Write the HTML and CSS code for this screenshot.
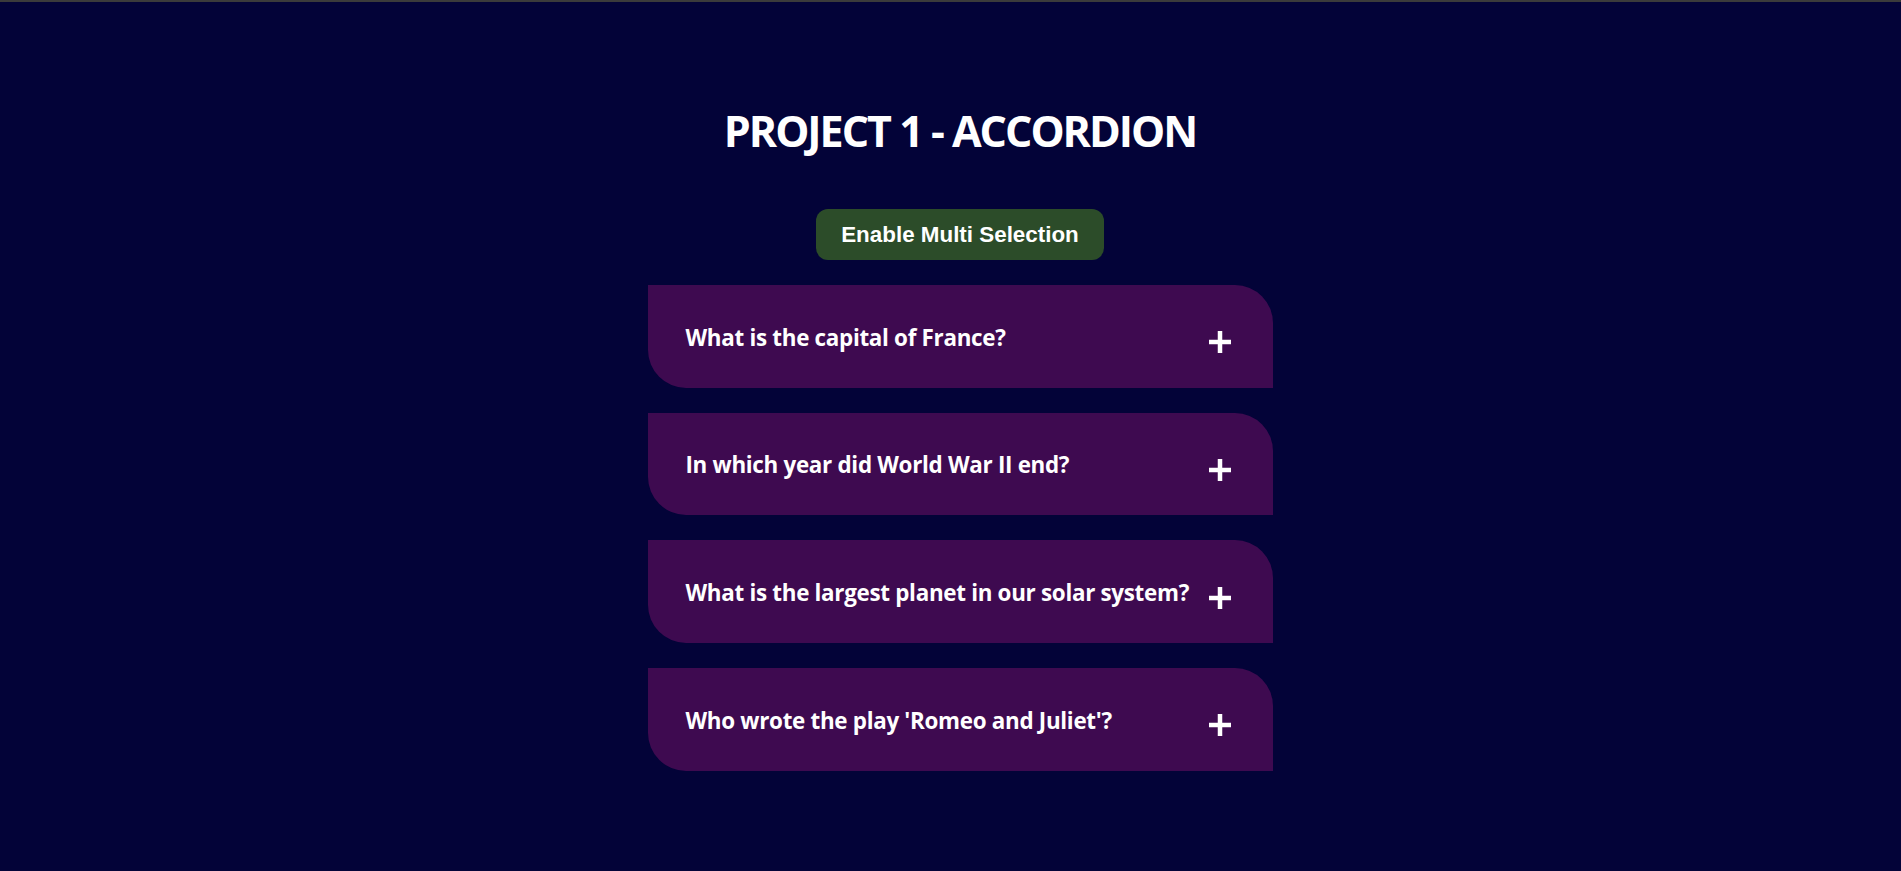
FILE: index.html
```html
<!DOCTYPE html>
<html lang="en">
<head>
<meta charset="utf-8">
<title>Accordion</title>
<link rel="stylesheet" href="styles.css">
</head>
<body>
<div class="topbar"></div>
<main class="page">
  <h1 class="title">PROJECT 1 - ACCORDION</h1>
  <button class="multi-btn">Enable Multi Selection</button>
  <div class="accordion">
    <div class="item">
      <span class="question">What is the capital of France?</span>
      <svg class="plus" viewBox="0 0 22 22" width="22" height="22"><rect x="8.75" y="0" width="4.5" height="22" fill="#fff"/><rect x="0" y="8.75" width="22" height="4.5" fill="#fff"/></svg>
    </div>
    <div class="item">
      <span class="question">In which year did World War II end?</span>
      <svg class="plus" viewBox="0 0 22 22" width="22" height="22"><rect x="8.75" y="0" width="4.5" height="22" fill="#fff"/><rect x="0" y="8.75" width="22" height="4.5" fill="#fff"/></svg>
    </div>
    <div class="item">
      <span class="question">What is the largest planet in our solar system?</span>
      <svg class="plus" viewBox="0 0 22 22" width="22" height="22"><rect x="8.75" y="0" width="4.5" height="22" fill="#fff"/><rect x="0" y="8.75" width="22" height="4.5" fill="#fff"/></svg>
    </div>
    <div class="item">
      <span class="question">Who wrote the play 'Romeo and Juliet'?</span>
      <svg class="plus" viewBox="0 0 22 22" width="22" height="22"><rect x="8.75" y="0" width="4.5" height="22" fill="#fff"/><rect x="0" y="8.75" width="22" height="4.5" fill="#fff"/></svg>
    </div>
  </div>
</main>
</body>
</html>
```
FILE: styles.css
```css
html, body {
  margin: 0;
  padding: 0;
  background: #030338;
  height: 100%;
}

body {
  font-family: "Open Sans", "Noto Sans", sans-serif;
  color: #ffffff;
  overflow: hidden;
}

.topbar {
  height: 2px;
  background: #3b3b3b;
}

.page {
  display: flex;
  flex-direction: column;
  align-items: center;
  padding-left: 19px;
  padding-top: 103px;
}

.title {
  margin: 0;
  font-size: 43px;
  line-height: 52px;
  font-weight: 700;
  letter-spacing: -2px;
}

.multi-btn {
  margin-top: 52px;
  height: 51px;
  padding: 0 25.5px;
  border: none;
  border-radius: 12px;
  background: #2c4c29;
  color: #ffffff;
  font-family: "Liberation Sans", Arial, sans-serif;
  font-weight: 700;
  font-size: 22.4px;
  line-height: 26px;
}

.accordion {
  margin-top: 25px;
  width: 625px;
  display: flex;
  flex-direction: column;
  gap: 25.2px;
}

.item {
  height: 102.5px;
  box-sizing: border-box;
  background: #3e0a50;
  border-radius: 0 38px 0 38px;
  padding: 2px 42px 0 38px;
  display: flex;
  align-items: center;
  justify-content: space-between;
}

.question {
  font-size: 22.4px;
  font-weight: 700;
  letter-spacing: -0.3px;
}

.plus {
  flex: none;
  margin-top: 10px;
}
```
